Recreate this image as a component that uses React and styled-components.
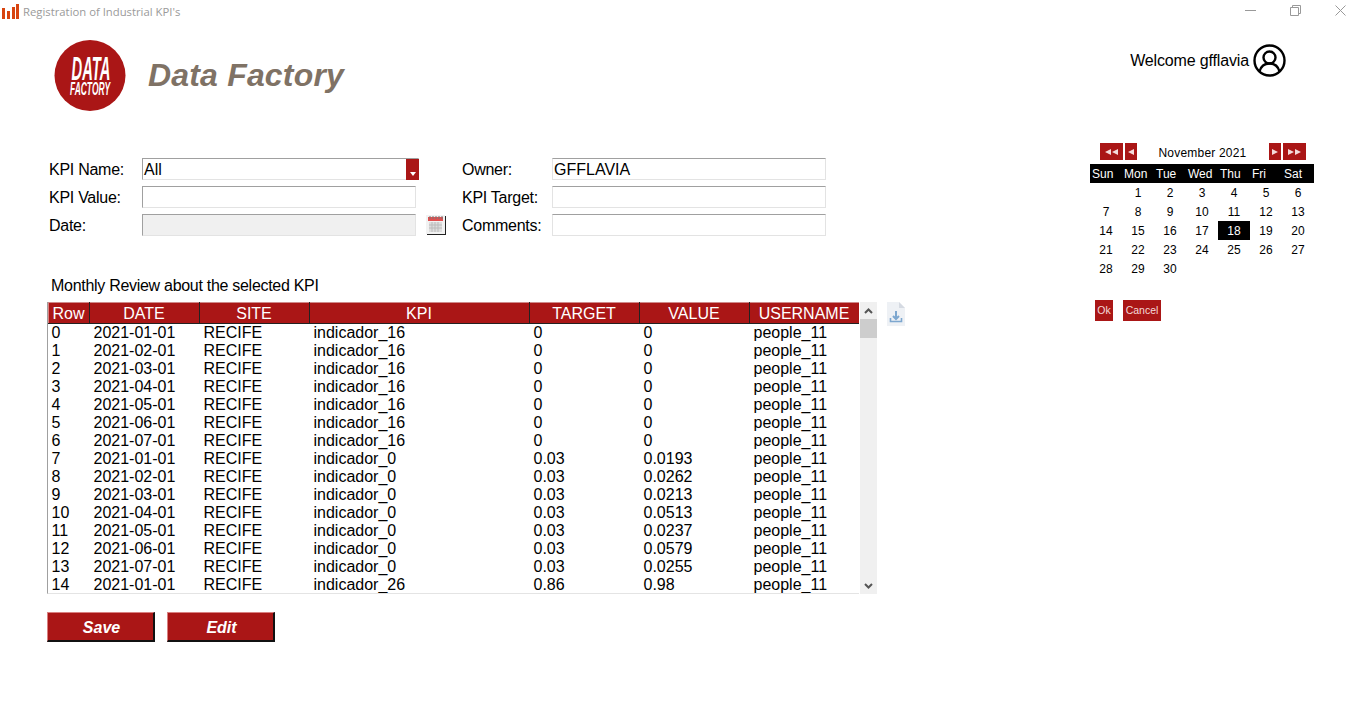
import React from 'react';
import styled, { createGlobalStyle } from 'styled-components';

const red = '#aa1616';

const GlobalStyle = createGlobalStyle`
  html, body {
    margin: 0;
    background: #fff;
    font-family: "Liberation Sans", Arial, sans-serif;
    color: #000;
    overflow: hidden;
  }
`;

const Page = styled.div`
  width: 1366px;
  height: 727px;
  display: flex;
  flex-direction: column;
`;

const TitleBar = styled.div`
  height: 24px;
  display: flex;
  align-items: center;
  padding-left: 1px;
  color: #9a9a9a;
  font: 11.3px "Open Sans", sans-serif;
`;

const TitleText = styled.span`
  margin: 0 0 2px 4px;
`;

const AppIconSvg = styled.svg`
  margin-bottom: 4px;
`;

const WindowControls = styled.div`
  margin: 0 0 4px auto;
  display: flex;
  width: 101px;
  padding-right: 20px;
  justify-content: space-between;
  align-items: center;
`;

const Header = styled.header`
  height: 88px;
  padding: 16px 80px 0 54px;
  display: flex;
  align-items: flex-start;
`;

const AppName = styled.h1`
  margin: 16px 0 0 22px;
  font-size: 32px;
  line-height: 38px;
  letter-spacing: 0.18px;
  font-style: italic;
  font-weight: bold;
  color: #7f7265;
`;

const Welcome = styled.div`
  margin-left: auto;
  display: flex;
  align-items: center;
  gap: 4px;
  margin-top: 4px;
  font-size: 16px;
  letter-spacing: -0.15px;
`;

const Body = styled.div`
  display: flex;
  padding: 30px 0 0 47px;
`;

const Main = styled.main`
  width: 1043px;
`;

const Form = styled.div`
  display: grid;
  grid-template-columns: 95px 274px 46px 90px 274px;
  grid-auto-rows: 22px;
  row-gap: 6px;
  align-items: center;
`;

const Label = styled.label`
  font-size: 16px;
  letter-spacing: -0.27px;
  padding: 2px 0 0 ${p => p.$pad || 0}px;
  white-space: nowrap;
`;

const Field = styled.div`
  height: 22px;
  box-sizing: border-box;
  margin-right: ${p => (p.$wide ? -3 : 0)}px;
  border: 1px solid #e3e3e3;
  border-top-color: #a0a0a0;
  border-left-color: ${p => (p.$right ? '#e3e3e3' : '#a0a0a0')};
  background: ${p => (p.$disabled ? '#f0f0f0' : '#fff')};
  font-size: 16px;
  line-height: 22px;
  padding-left: 1px;
  display: flex;
  align-items: flex-start;
  justify-content: space-between;
`;

const DropButton = styled.div`
  width: 13px;
  height: 21px;
  margin-right: -1px;
  background: ${red};
  display: flex;
  align-items: flex-end;
  justify-content: center;
  padding-bottom: 4px;
  box-sizing: border-box;
`;

const DropArrow = styled.div`
  width: 0;
  height: 0;
  border-left: 3.5px solid transparent;
  border-right: 3.5px solid transparent;
  border-top: 4px solid #fff;
`;

const CalCell = styled.div`
  height: 22px;
  display: flex;
  align-items: center;
  padding-left: 10px;
`;

const SectionTitle = styled.div`
  margin: 39px 0 0 4px;
  font-size: 16px;
  line-height: 22px;
  letter-spacing: -0.29px;
`;

const TableRow = styled.div`
  margin-top: 5px;
  display: flex;
  align-items: flex-start;
`;

const TableWrap = styled.div`
  width: 812px;
  height: 292px;
  overflow: hidden;
  border-left: 1px solid #a0a0a0;
  border-bottom: 1px solid #e4e4e4;
  box-sizing: border-box;
`;

const Table = styled.table`
  width: 811px;
  table-layout: fixed;
  border-collapse: collapse;
  font-size: 16px;
`;

const Th = styled.th`
  height: 21px;
  padding: 0 1px 0 0;
  box-sizing: border-box;
  background: ${red};
  color: #fff;
  font-weight: normal;
  line-height: 19px;
  text-align: center;
  border-top: 1px solid #cf8a8a;
  border-left: 1px solid #d98080;
  border-right: 1px solid #222;
  border-bottom: 1px solid #222;
`;

const Td = styled.td`
  height: 18px;
  padding: 0 0 0 4px;
  line-height: 18px;
  white-space: nowrap;

  &:first-child {
    padding-left: 3px;
  }
`;

const Scrollbar = styled.div`
  width: 17px;
  height: 292px;
  margin-left: 1px;
  background: #f0f0f0;
  display: flex;
  flex-direction: column;
  align-items: center;
`;

const ScrollButton = styled.div`
  width: 17px;
  height: 17px;
  display: flex;
  align-items: center;
  justify-content: center;
`;

const ScrollThumb = styled.div`
  width: 17px;
  height: 19px;
  background: #cdcdcd;
`;

const ScrollTrack = styled.div`
  flex: 1;
`;

const ExportButton = styled.div`
  width: 18px;
  height: 24px;
  margin-left: 10px;
`;

const Actions = styled.div`
  display: flex;
  gap: 12px;
  margin-top: 18px;
`;

const ActionButton = styled.button`
  width: 108px;
  height: 30px;
  padding: 2px 0 0 2px;
  background: ${red};
  color: #fff;
  font: italic bold 16px "Liberation Sans", Arial, sans-serif;
  border-style: solid;
  border-width: 1px 2px 2px 1px;
  border-color: #d98080 #111 #111 #d98080;
`;

const CalendarPanel = styled.aside`
  width: 224px;
  margin-top: -15px;
`;

const CalNav = styled.div`
  height: 21px;
  display: flex;
  align-items: flex-start;
  padding-left: 10px;
  font-size: 12px;
`;

const NavButton = styled.div`
  width: ${p => (p.$double ? 23 : 12)}px;
  height: 17px;
  background: ${red};
  margin-left: ${p => p.$gap || 0}px;
  display: flex;
  align-items: center;
  justify-content: center;
  gap: 1px;
`;

const NavArrow = styled.div`
  width: 0;
  height: 0;
  border-top: 3px solid transparent;
  border-bottom: 3px solid transparent;
  border-${p => (p.$left ? 'right' : 'left')}: 6px solid #f3dada;
`;

const MonthLabel = styled.div`
  width: 89px;
  margin-left: 21px;
  margin-right: 22px;
  line-height: 20px;
  letter-spacing: 0.2px;
  white-space: nowrap;
  text-align: center;
`;

const CalGrid = styled.div`
  display: grid;
  grid-template-columns: repeat(7, 32px);
  grid-auto-rows: 19px;
  font-size: 12px;
`;

const DayName = styled.div`
  background: #000;
  color: #fff;
  padding-left: 2px;
  line-height: 21px;
`;

const DayCell = styled.div`
  text-align: center;
  line-height: 21px;
  background: ${p => (p.$selected ? '#000' : 'transparent')};
  color: ${p => (p.$selected ? '#fff' : '#000')};
`;

const CalActions = styled.div`
  display: flex;
  gap: 10px;
  margin: 22px 0 0 5px;
`;

const CalButton = styled.div`
  height: 21px;
  width: ${p => p.$w}px;
  background: ${red};
  color: #f3dada;
  font-size: 10.5px;
  line-height: 21px;
  text-align: center;
`;

const Logo = () => (
  <svg width="72" height="72" viewBox="0 0 72 72">
    <circle cx="36" cy="35.5" r="35.5" fill={red} />
    <g fill="#fff" fontFamily="Liberation Sans" fontWeight="bold" fontStyle="italic" textAnchor="middle">
      <text transform="translate(37 40) scale(.447 1)" fontSize="33">DATA</text>
      <text transform="translate(36 55) scale(.471 1)" fontSize="18">FACTORY</text>
    </g>
  </svg>
);

const AppIcon = () => (
  <AppIconSvg width="18" height="18" viewBox="0 0 18 18" fill="#d8440f">
    <rect x="1" y="7" width="3" height="11" />
    <rect x="6" y="10" width="3" height="8" />
    <rect x="11" y="6" width="3" height="12" />
    <rect x="15" y="3" width="3" height="15" />
  </AppIconSvg>
);

const UserIcon = () => (
  <svg width="33" height="33" viewBox="0 0 33 33" fill="none" stroke="#000" strokeWidth="2.4">
    <circle cx="16.5" cy="16.5" r="15" />
    <circle cx="16.5" cy="13.5" r="6" />
    <path d="M6.5 27.5c1.5-5.5 5.5-8 10-8s8.500 2.500 10 8" />
  </svg>
);

const CalendarIcon = () => (
  <svg width="20" height="20" viewBox="0 0 20 20">
    <rect x="1" y="1" width="19" height="19" fill="#222" />
    <rect x="0" y="0" width="19" height="19" fill="#f2f2f2" />
    <rect x="2" y="2" width="15" height="4" fill="#e05050" />
    <path d="M4 1v3M7 1v3M10 1v3M13 1v3M16 1v3" stroke="#777" strokeWidth="1" />
    <path d="M3 7h13v10H3z" fill="#ddd" />
    <path d="M3 10h13M3 13h13M6 7v10M9 7v10M12 7v10" stroke="#bbb" strokeWidth="1" />
  </svg>
);

const DownloadIcon = () => (
  <svg width="18" height="24" viewBox="0 0 18 24">
    <path d="M0 0h12l6 6v18H0z" fill="#eef1f5" />
    <path d="M12 0l6 6h-6z" fill="#d5dae2" />
    <path d="M9 9v8M6 14l3 3 3-3" fill="none" stroke="#7da7cf" strokeWidth="2" />
    <path d="M3.500 16v3.500h11V16" fill="none" stroke="#7da7cf" strokeWidth="1.600" />
  </svg>
);

const MinimizeIcon = () => (
  <svg width="11" height="11" viewBox="0 0 11 11"><path d="M0 5.500h11" stroke="#999" /></svg>
);
const RestoreIcon = () => (
  <svg width="11" height="11" viewBox="0 0 11 11" fill="none" stroke="#999">
    <path d="M.5 2.500h8v8h-8zM2.500 2.500v-2h8v8h-2" />
  </svg>
);
const CloseIcon = () => (
  <svg width="11" height="11" viewBox="0 0 11 11"><path d="M.5.5l10 10M10.500.5l-10 10" stroke="#999" /></svg>
);

const ChevronIcon = ({ up }) => (
  <svg width="9" height="6" viewBox="0 0 9 6">
    <path d={up ? 'M1 5l3.500-3.500L8 5' : 'M1 1l3.500 3.500L8 1'} fill="none" stroke="#555" strokeWidth="2" />
  </svg>
);

const columns = [
  ['Row', 41],
  ['DATE', 110],
  ['SITE', 110],
  ['KPI', 220],
  ['TARGET', 110],
  ['VALUE', 110],
  ['USERNAME', 110],
];

const rows = [
  ['2021-01-01', 'indicador_16', '0', '0'],
  ['2021-02-01', 'indicador_16', '0', '0'],
  ['2021-03-01', 'indicador_16', '0', '0'],
  ['2021-04-01', 'indicador_16', '0', '0'],
  ['2021-05-01', 'indicador_16', '0', '0'],
  ['2021-06-01', 'indicador_16', '0', '0'],
  ['2021-07-01', 'indicador_16', '0', '0'],
  ['2021-01-01', 'indicador_0', '0.03', '0.0193'],
  ['2021-02-01', 'indicador_0', '0.03', '0.0262'],
  ['2021-03-01', 'indicador_0', '0.03', '0.0213'],
  ['2021-04-01', 'indicador_0', '0.03', '0.0513'],
  ['2021-05-01', 'indicador_0', '0.03', '0.0237'],
  ['2021-06-01', 'indicador_0', '0.03', '0.0579'],
  ['2021-07-01', 'indicador_0', '0.03', '0.0255'],
  ['2021-01-01', 'indicador_26', '0.86', '0.98'],
];

const dayNames = ['Sun', 'Mon', 'Tue', 'Wed', 'Thu', 'Fri', 'Sat'];
// november 2021 starts on a monday
const days = [null, ...Array.from({ length: 30 }, (_, i) => i + 1)];

const Calendar = () => (
  <CalendarPanel>
    <CalNav>
      <NavButton $double>
        <NavArrow $left />
        <NavArrow $left />
      </NavButton>
      <NavButton $gap={2}>
        <NavArrow $left />
      </NavButton>
      <MonthLabel>November 2021</MonthLabel>
      <NavButton>
        <NavArrow />
      </NavButton>
      <NavButton $double $gap={2}>
        <NavArrow />
        <NavArrow />
      </NavButton>
    </CalNav>
    <CalGrid>
      {dayNames.map(d => (
        <DayName key={d}>{d}</DayName>
      ))}
      {days.map((d, i) => (
        <DayCell key={i} $selected={d === 18}>
          {d}
        </DayCell>
      ))}
    </CalGrid>
    <CalActions>
      <CalButton $w={18}>Ok</CalButton>
      <CalButton $w={38}>Cancel</CalButton>
    </CalActions>
  </CalendarPanel>
);

const App = () => (
  <Page>
    <GlobalStyle />
    <TitleBar>
      <AppIcon />
      <TitleText>Registration of Industrial KPI's</TitleText>
      <WindowControls>
        <MinimizeIcon />
        <RestoreIcon />
        <CloseIcon />
      </WindowControls>
    </TitleBar>
    <Header>
      <Logo />
      <AppName>Data Factory</AppName>
      <Welcome>
        Welcome gfflavia
        <UserIcon />
      </Welcome>
    </Header>
    <Body>
      <Main>
        <Form>
          <Label $pad={2}>KPI Name:</Label>
          <Field $wide>
            All
            <DropButton>
              <DropArrow />
            </DropButton>
          </Field>
          <span />
          <Label>Owner:</Label>
          <Field $right>GFFLAVIA</Field>

          <Label $pad={2}>KPI Value:</Label>
          <Field />
          <span />
          <Label>KPI Target:</Label>
          <Field $right />

          <Label $pad={2}>Date:</Label>
          <Field $disabled />
          <CalCell>
            <CalendarIcon />
          </CalCell>
          <Label>Comments:</Label>
          <Field $right />
        </Form>
        <SectionTitle>Monthly Review about the selected KPI</SectionTitle>
        <TableRow>
          <TableWrap>
            <Table>
              <colgroup>
                {columns.map(([name, width]) => (
                  <col key={name} width={width} />
                ))}
              </colgroup>
              <thead>
                <tr>
                  {columns.map(([name]) => (
                    <Th key={name}>{name}</Th>
                  ))}
                </tr>
              </thead>
              <tbody>
                {rows.map((r, i) => (
                  <tr key={i}>
                    <Td>{i}</Td>
                    <Td>{r[0]}</Td>
                    <Td>RECIFE</Td>
                    <Td>{r[1]}</Td>
                    <Td>{r[2]}</Td>
                    <Td>{r[3]}</Td>
                    <Td>people_11</Td>
                  </tr>
                ))}
              </tbody>
            </Table>
          </TableWrap>
          <Scrollbar>
            <ScrollButton>
              <ChevronIcon up />
            </ScrollButton>
            <ScrollThumb />
            <ScrollTrack />
            <ScrollButton>
              <ChevronIcon />
            </ScrollButton>
          </Scrollbar>
          <ExportButton>
            <DownloadIcon />
          </ExportButton>
        </TableRow>
        <Actions>
          <ActionButton>Save</ActionButton>
          <ActionButton>Edit</ActionButton>
        </Actions>
      </Main>
      <Calendar />
    </Body>
  </Page>
);

export default App;
